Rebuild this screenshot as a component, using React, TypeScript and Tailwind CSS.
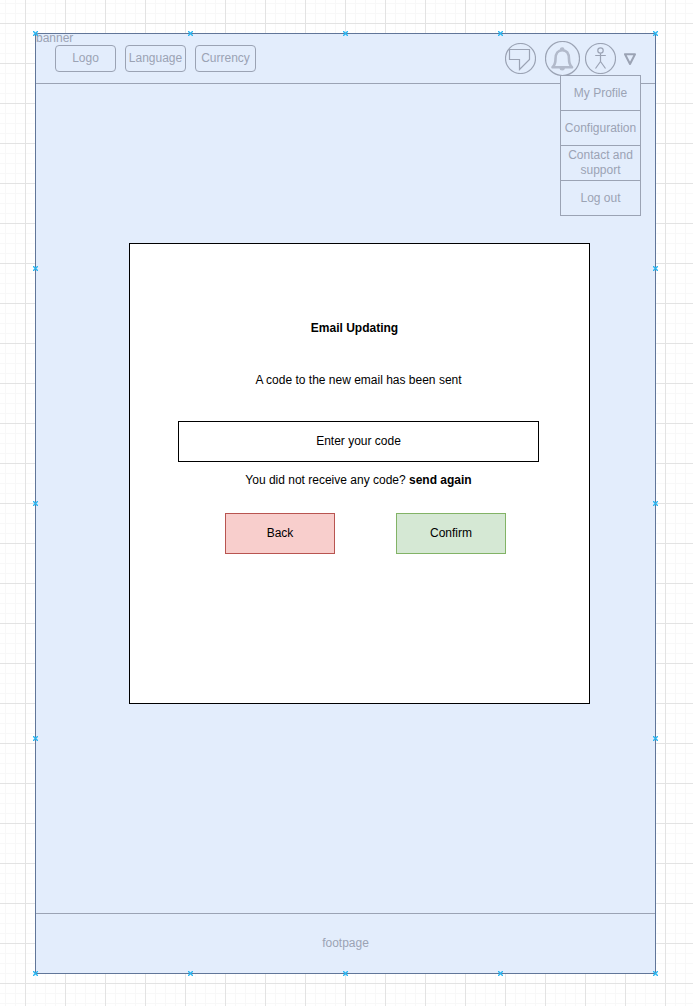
import React from "react";

const menuItems = ["My Profile", "Configuration", "Contact and support", "Log out"];

const handlePositions = [
  "left-0 top-0",
  "left-1/4 top-0",
  "left-1/2 top-0",
  "left-3/4 top-0",
  "left-full top-0",
  "left-0 top-1/4",
  "left-0 top-1/2",
  "left-0 top-3/4",
  "left-full top-1/4",
  "left-full top-1/2",
  "left-full top-3/4",
  "left-0 top-full",
  "left-1/4 top-full",
  "left-1/2 top-full",
  "left-3/4 top-full",
  "left-full top-full",
];

function HeaderButton({ children }: { children: React.ReactNode }) {
  return (
    <button
      type="button"
      className="flex h-[27px] w-[61px] items-center justify-center rounded border border-[#9ba3b4]"
    >
      {children}
    </button>
  );
}

function ConnectionPoint({ position }: { position: string }) {
  return (
    <svg
      viewBox="0 0 5 5"
      className={"absolute -mt-[2px] -ml-[2px] size-[5px] " + position}
      stroke="#29b6f2"
      strokeWidth="1.4"
      aria-hidden="true"
    >
      <path d="M0 0L5 5M0 5L5 0" />
    </svg>
  );
}

function ChatIcon() {
  return (
    <svg viewBox="0 0 31 31" className="size-[31px]" fill="none" stroke="#9ba3b4" strokeWidth="1.2" aria-hidden="true">
      <circle cx="15.5" cy="15.5" r="15" />
      <path d="M4.5 6.500H24.500V16.500L14.500 26.500V16.500H4.500Z" />
    </svg>
  );
}

function BellIcon() {
  return (
    <svg viewBox="0 0 35 35" className="size-[35px]" fill="none" stroke="#9ba3b4" strokeWidth="1.2" aria-hidden="true">
      <circle cx="17.5" cy="17.5" r="17" />
      <path
        d="M7.500 26.300C9.500 24.500 10.500 22 10.500 18C10.500 12.500 13 9.300 17.200 9.300C21.400 9.300 24 12.500 24 18C24 22 25 24.500 27 26.300Z"
        stroke="#b2bacb"
        strokeWidth="2.600"
        strokeLinejoin="round"
      />
      <path d="M15.500 8.500a1.700 1.700 0 0 1 3.400 0ZM15.200 27.500a2 1.500 0 0 0 4 0Z" fill="#b2bacb" stroke="#b2bacb" />
    </svg>
  );
}

function PersonIcon() {
  return (
    <svg viewBox="0 0 31 31" className="size-[31px]" fill="none" stroke="#9ba3b4" strokeWidth="1.2" aria-hidden="true">
      <circle cx="15.5" cy="15.5" r="15" />
      <circle cx="15.5" cy="7.5" r="2.7" />
      <path d="M15.500 10.200V18.500M10.200 12.500H20.800M15.500 18.500L10.500 25.500M15.500 18.500L20.500 25.500" />
    </svg>
  );
}

export default function App() {
  return (
    <div className="flex min-h-screen flex-col bg-white bg-[linear-gradient(to_right,#e3e3e3_1px,transparent_1px),linear-gradient(to_bottom,#e3e3e3_1px,transparent_1px),linear-gradient(to_right,#f8f8f8_1px,transparent_1px),linear-gradient(to_bottom,#f8f8f8_1px,transparent_1px)] bg-[length:40px_40px,40px_40px,10px_10px,10px_10px] bg-[position:25px_23px,25px_23px,5px_3px,5px_3px] pt-[33px] pr-[37px] pb-8 pl-[35px] font-['Liberation_Sans',Arial,sans-serif] text-xs leading-[15px]">
      <div className="relative flex flex-1 flex-col border border-[#617699] bg-[#e3edfc]">
        <header className="relative flex h-[50px] items-center justify-between border-b border-[#9ba3b4] px-[19px] text-[#9ba3b4]">
          <span className="absolute top-[-3px] left-0">banner</span>
          <div className="flex gap-[9px]">
            <HeaderButton>Logo</HeaderButton>
            <HeaderButton>Language</HeaderButton>
            <HeaderButton>Currency</HeaderButton>
          </div>
          <div className="flex items-center">
            <button type="button" aria-label="Messages" className="mr-[9px]">
              <ChatIcon />
            </button>
            <button type="button" aria-label="Notifications" className="mr-[5px]">
              <BellIcon />
            </button>
            <button type="button" aria-label="Account" className="mr-2">
              <PersonIcon />
            </button>
            <button type="button" aria-label="Open account menu" aria-expanded="true">
              <svg viewBox="0 0 12 12" className="size-3" fill="none" stroke="#9ba3b4" strokeWidth="2" strokeLinejoin="round" aria-hidden="true">
                <path d="M1 1.200H11L6 11Z" />
              </svg>
            </button>
          </div>
          <nav
            aria-label="Account"
            className="absolute top-[41px] right-[14px] z-10 w-[81px] divide-y divide-[#9ba3b4] border border-[#9ba3b4] bg-[#e3edfc]"
          >
            {menuItems.map((item) => (
              <a
                key={item}
                href="#"
                className="flex h-[35px] items-center justify-center text-center last:h-[34px]"
              >
                {item}
              </a>
            ))}
          </nav>
        </header>

        <main className="flex-1 pt-[159px] pr-[65px] pb-[209px] pl-[93px]">
          <form
            className="min-h-[461px] border border-black bg-white pt-[77px] pr-[50px] pl-[48px] text-center text-black"
            onSubmit={(event) => event.preventDefault()}
          >
            <h1 className="pr-2 font-bold">Email Updating</h1>
            <p className="mt-[37px]">A code to the new email has been sent</p>
            <input
              type="text"
              aria-label="Enter your code"
              placeholder="Enter your code"
              className="mt-[33px] block h-[41px] w-full border border-black bg-white pb-px text-center placeholder:text-black placeholder:opacity-100"
            />
            <p className="mt-[11px]">
              You did not receive any code?{" "}
              <a href="#" className="font-bold">
                send again
              </a>
            </p>
            <div className="mt-[25px] flex gap-[61px] pl-[47px]">
              <button type="button" className="h-[41px] w-[110px] border border-[#b85450] bg-[#f8cecc]">
                Back
              </button>
              <button type="submit" className="h-[41px] w-[110px] border border-[#82b366] bg-[#d5e8d4]">
                Confirm
              </button>
            </div>
          </form>
        </main>

        <footer className="flex h-[60px] items-center justify-center border-t border-[#9ba3b4] text-[#9ba3b4]">
          footpage
        </footer>

        <div className="pointer-events-none absolute -top-px -left-px h-[calc(100%+1px)] w-[calc(100%+1px)]">
          {handlePositions.map((position) => (
            <ConnectionPoint key={position} position={position} />
          ))}
        </div>
      </div>
    </div>
  );
}
